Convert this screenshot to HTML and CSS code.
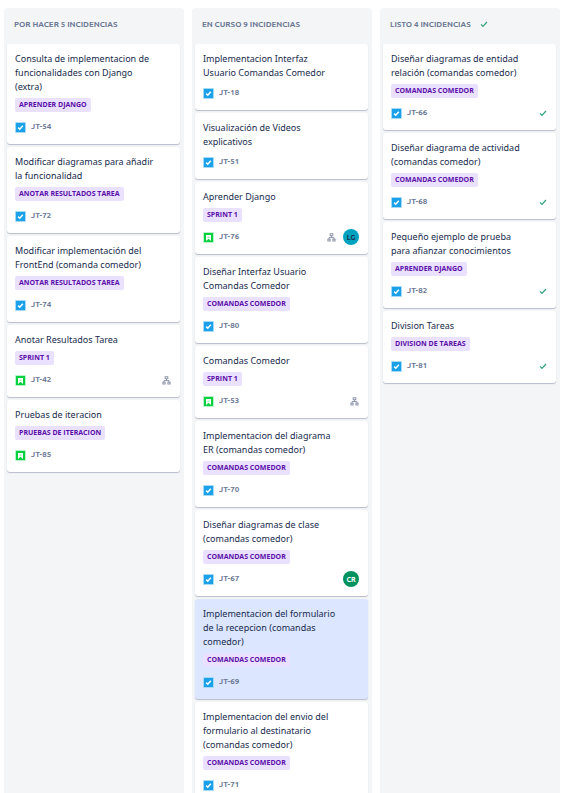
FILE: index.html
```html
<!DOCTYPE html>
<html lang="es">
<head>
<meta charset="utf-8">
<meta name="viewport" content="width=device-width, initial-scale=1">
<title>Tablero</title>
<link rel="stylesheet" href="styles.css">
</head>
<body>
<svg class="sprite" aria-hidden="true">
  <symbol id="task" viewBox="0 0 11 11">
    <rect width="11" height="11" rx="1" fill="#a5daf7"/>
    <rect x="1" y="1" width="9" height="9" fill="#1ba1ea"/>
    <path d="M3.2 5.6l1.6 1.6 3-3.5" fill="none" stroke="#fff" stroke-width="1.5"/>
  </symbol>
  <symbol id="story" viewBox="0 0 11 11">
    <rect width="11" height="11" rx="1" fill="#b5f3c8"/>
    <rect x="1" y="1" width="9" height="9" fill="#06d03f"/>
    <path d="M3 3h5v6L5.5 6.8 3 9z" fill="#fff"/>
    <rect x="4.5" y="4.5" width="2" height="1.5" fill="#a5ecb9"/>
  </symbol>
  <symbol id="tree" viewBox="0 0 9 9">
    <g fill="none" stroke="#8f97ab" stroke-width="1">
      <rect x="3.2" y="0.7" width="2.6" height="2"/>
      <path d="M4.5 2.7v2M2 6.2V4.6h5v1.6"/>
      <rect x="0.9" y="6.2" width="2.2" height="1.8"/>
      <rect x="5.9" y="6.2" width="2.2" height="1.8"/>
    </g>
  </symbol>
  <symbol id="check" viewBox="0 0 8 8">
    <path d="M1 4.4l1.9 1.9L7 2" fill="none" stroke="#2fa377" stroke-width="1.2"/>
  </symbol>
</svg>
<main class="board">
  <section class="column">
    <h2 class="heading">POR HACER 5 INCIDENCIAS</h2>
    <ul class="cards">
      <li class="card">
        <p class="title">Consulta de implementacion de<br>funcionalidades con Django<br>(extra)</p>
        <span class="tag">APRENDER DJANGO</span>
        <div class="meta"><svg class="type"><use href="#task"/></svg><a class="key" href="#">JT-54</a></div>
      </li>
      <li class="card">
        <p class="title">Modificar diagramas para añadir<br>la funcionalidad</p>
        <span class="tag">ANOTAR RESULTADOS TAREA</span>
        <div class="meta"><svg class="type"><use href="#task"/></svg><a class="key" href="#">JT-72</a></div>
      </li>
      <li class="card">
        <p class="title">Modificar implementación del<br>FrontEnd (comanda comedor)</p>
        <span class="tag">ANOTAR RESULTADOS TAREA</span>
        <div class="meta"><svg class="type"><use href="#task"/></svg><a class="key" href="#">JT-74</a></div>
      </li>
      <li class="card">
        <p class="title">Anotar Resultados Tarea</p>
        <span class="tag">SPRINT 1</span>
        <div class="meta"><svg class="type"><use href="#story"/></svg><a class="key" href="#">JT-42</a><svg class="tree"><use href="#tree"/></svg></div>
      </li>
      <li class="card">
        <p class="title">Pruebas de iteracion</p>
        <span class="tag">PRUEBAS DE ITERACION</span>
        <div class="meta"><svg class="type"><use href="#story"/></svg><a class="key" href="#">JT-85</a></div>
      </li>
    </ul>
  </section>
  <section class="column">
    <h2 class="heading">EN CURSO 9 INCIDENCIAS</h2>
    <ul class="cards">
      <li class="card">
        <p class="title">Implementacion Interfaz<br>Usuario Comandas Comedor</p>
        <div class="meta"><svg class="type"><use href="#task"/></svg><a class="key" href="#">JT-18</a></div>
      </li>
      <li class="card">
        <p class="title">Visualización de Videos<br>explicativos</p>
        <div class="meta"><svg class="type"><use href="#task"/></svg><a class="key" href="#">JT-51</a></div>
      </li>
      <li class="card">
        <p class="title">Aprender Django</p>
        <span class="tag">SPRINT 1</span>
        <div class="meta"><svg class="type"><use href="#story"/></svg><a class="key" href="#">JT-76</a><svg class="tree"><use href="#tree"/></svg><span class="avatar teal">LG</span></div>
      </li>
      <li class="card">
        <p class="title">Diseñar Interfaz Usuario<br>Comandas Comedor</p>
        <span class="tag">COMANDAS COMEDOR</span>
        <div class="meta"><svg class="type"><use href="#task"/></svg><a class="key" href="#">JT-80</a></div>
      </li>
      <li class="card">
        <p class="title">Comandas Comedor</p>
        <span class="tag">SPRINT 1</span>
        <div class="meta"><svg class="type"><use href="#story"/></svg><a class="key" href="#">JT-53</a><svg class="tree"><use href="#tree"/></svg></div>
      </li>
      <li class="card">
        <p class="title">Implementacion del diagrama<br>ER (comandas comedor)</p>
        <span class="tag">COMANDAS COMEDOR</span>
        <div class="meta"><svg class="type"><use href="#task"/></svg><a class="key" href="#">JT-70</a></div>
      </li>
      <li class="card">
        <p class="title">Diseñar diagramas de clase<br>(comandas comedor)</p>
        <span class="tag">COMANDAS COMEDOR</span>
        <div class="meta"><svg class="type"><use href="#task"/></svg><a class="key" href="#">JT-67</a><span class="avatar green">CR</span></div>
      </li>
      <li class="card selected">
        <p class="title">Implementacion del formulario<br>de la recepcion (comandas<br>comedor)</p>
        <span class="tag">COMANDAS COMEDOR</span>
        <div class="meta"><svg class="type"><use href="#task"/></svg><a class="key" href="#">JT-69</a></div>
      </li>
      <li class="card">
        <p class="title">Implementacion del envio del<br>formulario al destinatario<br>(comandas comedor)</p>
        <span class="tag">COMANDAS COMEDOR</span>
        <div class="meta"><svg class="type"><use href="#task"/></svg><a class="key" href="#">JT-71</a></div>
      </li>
    </ul>
  </section>
  <section class="column">
    <h2 class="heading">LISTO 4 INCIDENCIAS<svg class="check"><use href="#check"/></svg></h2>
    <ul class="cards">
      <li class="card">
        <p class="title">Diseñar diagramas de entidad<br>relación (comandas comedor)</p>
        <span class="tag">COMANDAS COMEDOR</span>
        <div class="meta"><svg class="type"><use href="#task"/></svg><a class="key" href="#">JT-66</a><svg class="check"><use href="#check"/></svg></div>
      </li>
      <li class="card">
        <p class="title">Diseñar diagrama de actividad<br>(comandas comedor)</p>
        <span class="tag">COMANDAS COMEDOR</span>
        <div class="meta"><svg class="type"><use href="#task"/></svg><a class="key" href="#">JT-68</a><svg class="check"><use href="#check"/></svg></div>
      </li>
      <li class="card">
        <p class="title">Pequeño ejemplo de prueba<br>para afianzar conocimientos</p>
        <span class="tag">APRENDER DJANGO</span>
        <div class="meta"><svg class="type"><use href="#task"/></svg><a class="key" href="#">JT-82</a><svg class="check"><use href="#check"/></svg></div>
      </li>
      <li class="card">
        <p class="title">Division Tareas</p>
        <span class="tag">DIVISION DE TAREAS</span>
        <div class="meta"><svg class="type"><use href="#task"/></svg><a class="key" href="#">JT-81</a><svg class="check"><use href="#check"/></svg></div>
      </li>
    </ul>
  </section>
</main>
</body>
</html>
```
FILE: styles.css
```css
* { box-sizing: border-box; }

body {
  margin: 0;
  background: #fff;
  color: #172b4d;
  font-family: Ubuntu, "Noto Sans", sans-serif;
}

.sprite { display: none; }

.board {
  display: grid;
  grid-template-columns: repeat(3, minmax(0, 1fr));
  gap: 8px;
  min-height: 100vh;
  padding: 8px 7px 0 4px;
}

.column {
  padding: 0 4px 0 3px;
  background: #f4f5f7;
  border-radius: 4px 4px 0 0;
}

.heading {
  display: flex;
  align-items: center;
  height: 36px;
  margin: 0;
  padding: 0 7px 4px;
  color: #6b7894;
  font-size: 8px;
  font-weight: 600;
}

.heading .check { margin-left: 9px; }

.cards {
  display: flex;
  flex-direction: column;
  gap: 3px;
  margin: 0;
  padding: 0;
  list-style: none;
}

.card {
  padding: 8px 9px 9px 8px;
  background: #fff;
  border-radius: 3px;
  box-shadow: 0 1px 1px #b9bdcb;
}

.selected { background: #dce6ff; }

.title {
  margin: 0;
  font-family: "Noto Sans", sans-serif;
  font-size: 9px;
  line-height: 14px;
  white-space: nowrap;
}

.tag {
  display: block;
  width: fit-content;
  margin-top: 4px;
  padding: 0 4px;
  background: #eae0ff;
  border-radius: 2px;
  color: #5a0fa8;
  font-family: "Open Sans", sans-serif;
  font-size: 7px;
  font-weight: 700;
  line-height: 14px;
}

.meta {
  display: flex;
  align-items: center;
  height: 16px;
  margin-top: 5px;
}

.tag + .meta { margin-top: 7px; }

.type { width: 11px; height: 11px; }

.key {
  margin: 0 auto 0 5px;
  color: #6b7894;
  font-size: 8px;
  font-weight: 600;
  line-height: 14px;
  text-decoration: none;
}

.tree { width: 9px; height: 9px; }

.check { width: 8px; height: 8px; }

.avatar {
  width: 16px;
  height: 16px;
  margin-left: 7px;
  border-radius: 50%;
  font-size: 7px;
  font-weight: 600;
  line-height: 16px;
  text-align: center;
}

.teal { background: #00a3bf; color: #172b4d; }

.green { background: #00935f; color: #fff; }
```
